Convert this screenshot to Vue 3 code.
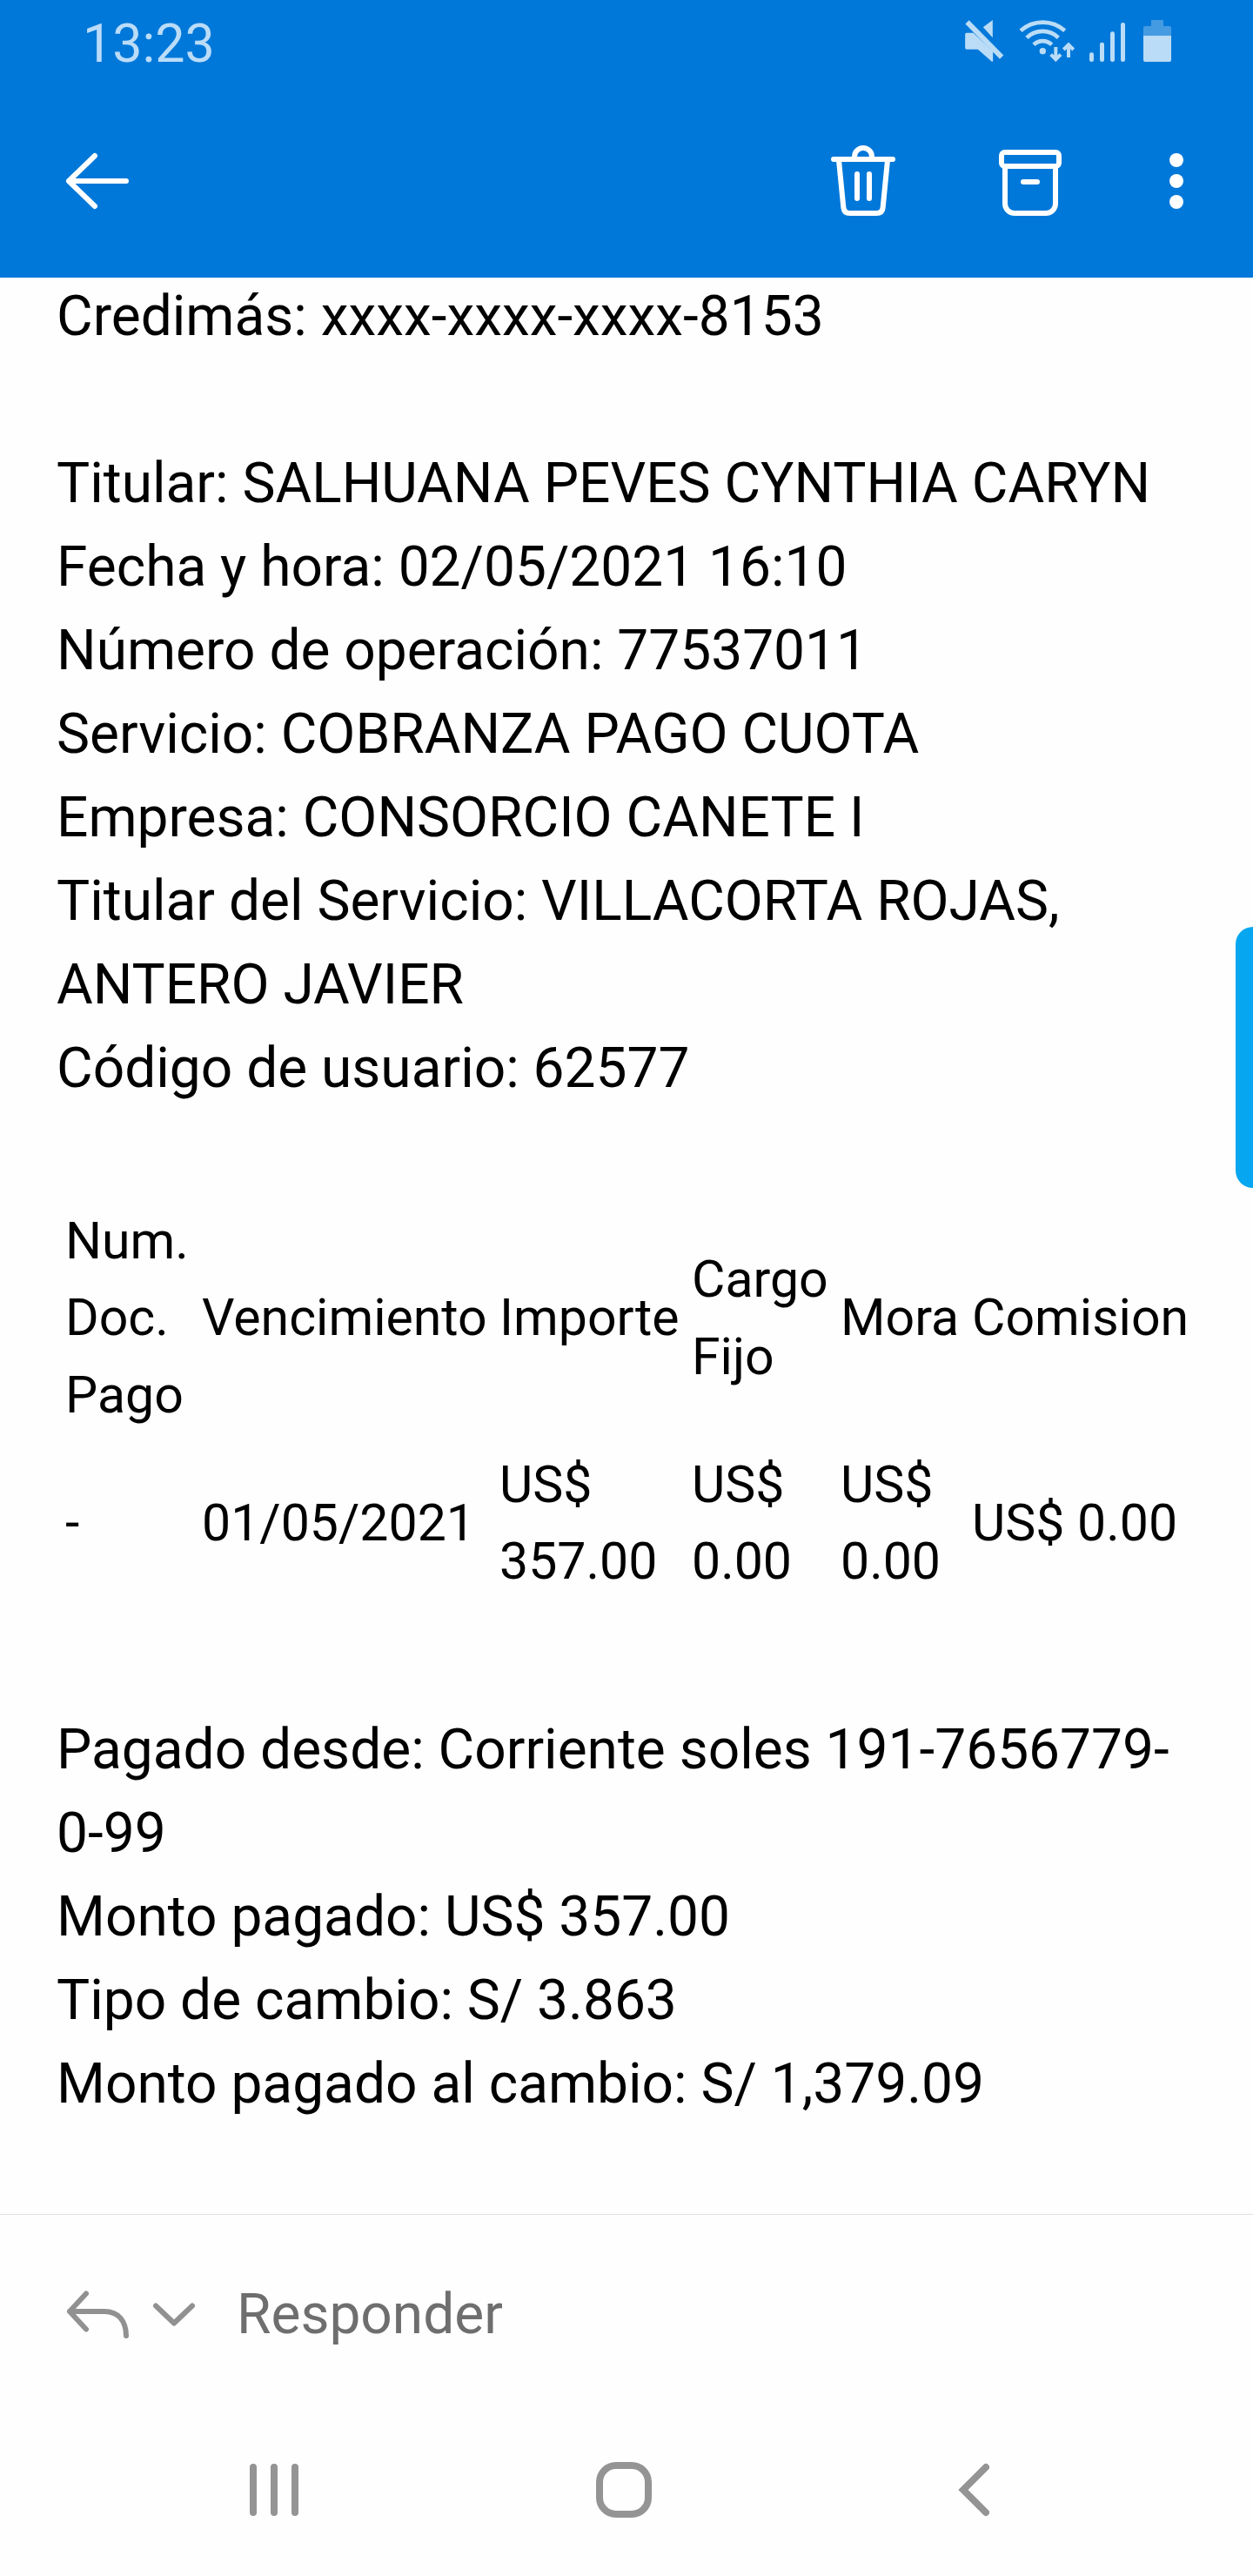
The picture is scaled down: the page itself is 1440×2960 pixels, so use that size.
<template>
  <div class="screen">
    <header class="header">
      <div class="status-bar">
        <span class="time">13:23</span>
        <div class="status-icons">
          <svg class="icon-mute" viewBox="0 0 140 144">
            <path d="M98 0V61L65 25z" />
            <path d="M8 44H31L99 108V143H95L47 101H8Q3 101 3 96V49Q3 44 8 44z" />
            <path class="line" stroke-width="18" d="M10 7L129 128" />
          </svg>
          <svg class="icon-wifi" viewBox="0 0 192 144">
            <g class="line" stroke-width="14">
              <path d="M6 37A114 114 0 0 1 158 37" />
              <path d="M27 61A78 78 0 0 1 136 61" />
              <path d="M51 85A44 44 0 0 1 113 85" />
            </g>
            <circle cx="82" cy="107" r="11" />
            <path class="line" stroke-width="12" d="M127 93V136M110 119L127 136L144 119M171 129V86M154 102L171 85L188 102" />
          </svg>
          <svg class="icon-signal" viewBox="0 0 123 144">
            <rect v-for="bar in signalBars" :key="bar.x" :x="bar.x" :y="bar.y" width="15" :height="144 - bar.y" rx="7" />
          </svg>
          <svg class="icon-battery" viewBox="0 0 96 144">
            <path class="battery-empty" d="M27 0H69V21H90Q96 21 96 27V54H0V27Q0 21 6 21H27z" />
            <path d="M0 54H96V138Q96 144 90 144H6Q0 144 0 138z" />
          </svg>
        </div>
      </div>
      <div class="toolbar">
        <svg class="tool back" viewBox="0 0 216 252">
          <path d="M99 39L9 126L99 213M9 126H207" />
        </svg>
        <svg class="tool trash" viewBox="0 0 222 252">
          <path d="M9 51H213M81 45V42A30 30 0 0 1 141 42V45" />
          <path d="M27 54L43 217Q45 237 65 237H157Q177 237 179 217L195 54" />
          <path d="M90 102V186M132 102V186" />
        </svg>
        <svg class="tool archive" viewBox="0 0 216 252">
          <rect x="9" y="27" width="198" height="48" rx="11" />
          <path d="M21 75V204A33 33 0 0 0 54 237H162A33 33 0 0 0 195 204V75M84 129H132" />
        </svg>
        <svg class="more" viewBox="0 0 48 252">
          <circle v-for="y in [54, 126, 198]" :key="y" cx="24" :cy="y" r="24" />
        </svg>
      </div>
    </header>

    <main class="mail">
      <p>Credimás: xxxx-xxxx-xxxx-8153</p>
      <br />
      <p v-for="item in details" :key="item.label">{{ item.label }}: {{ item.value }}</p>

      <table class="fees">
        <thead>
          <tr>
            <th v-for="col in columns" :key="col.title" :style="{ width: col.width + 'px' }">{{ col.title }}</th>
          </tr>
        </thead>
        <tbody>
          <tr class="gap"></tr>
          <tr>
            <td v-for="col in columns" :key="col.title">{{ col.value }}</td>
          </tr>
        </tbody>
      </table>

      <p v-for="item in payment" :key="item.label">{{ item.label }}: {{ item.value }}</p>
    </main>

    <div class="reply-bar">
      <svg class="icon-reply" viewBox="0 0 72 56">
        <path d="M23 3.5L4 24L23 44.5M4 24H44C60 24 69 35 69 52" />
      </svg>
      <svg class="icon-chevron" viewBox="0 0 50 56">
        <path d="M4 17.5L25 37.5L46 17.5" />
      </svg>
      <span>Responder</span>
    </div>

    <nav class="nav-bar">
      <svg class="nav-recents" viewBox="0 0 56 64">
        <path d="M4 6V58M28 6V58M52 6V58" />
      </svg>
      <svg class="nav-home" viewBox="0 0 64 64">
        <rect x="4" y="4" width="56" height="56" rx="19" />
      </svg>
      <svg class="nav-back" viewBox="0 0 36 64">
        <path d="M32 6L6 32L32 58" />
      </svg>
    </nav>

    <div class="edge-handle"></div>
  </div>
</template>

<script setup>
const signalBars = [
  { x: 0, y: 112 },
  { x: 36, y: 77 },
  { x: 72, y: 40 },
  { x: 108, y: 9 }
]

const details = [
  { label: 'Titular', value: 'SALHUANA PEVES CYNTHIA CARYN' },
  { label: 'Fecha y hora', value: '02/05/2021 16:10' },
  { label: 'Número de operación', value: '77537011' },
  { label: 'Servicio', value: 'COBRANZA PAGO CUOTA' },
  { label: 'Empresa', value: 'CONSORCIO CANETE I' },
  { label: 'Titular del Servicio', value: 'VILLACORTA ROJAS, ANTERO JAVIER' },
  { label: 'Código de usuario', value: '62577' }
]

const columns = [
  { title: 'Num. Doc. Pago', value: '-', width: 157 },
  { title: 'Vencimiento', value: '01/05/2021', width: 342 },
  { title: 'Importe', value: 'US$ 357.00', width: 221 },
  { title: 'Cargo Fijo', value: 'US$ 0.00', width: 171 },
  { title: 'Mora', value: 'US$ 0.00', width: 151 },
  { title: 'Comision', value: 'US$ 0.00', width: 259 }
]

const payment = [
  { label: 'Pagado desde', value: 'Corriente soles 191-7656779-0-99' },
  { label: 'Monto pagado', value: 'US$ 357.00' },
  { label: 'Tipo de cambio', value: 'S/ 3.863' },
  { label: 'Monto pagado al cambio', value: 'S/ 1,379.09' }
]
</script>

<style>
body {
  margin: 0;
  background: #fefefe;
}
</style>

<style scoped>
.screen {
  position: relative;
  display: flex;
  flex-direction: column;
  width: 1440px;
  height: 2960px;
  overflow: hidden;
  background: #fefefe;
  color: #000;
  font-family: Roboto, sans-serif;
  font-size: 64px;
  line-height: 96px;
}

svg {
  display: block;
  flex: none;
}

.header {
  height: 319px;
  flex: none;
  background: #0078d9;
}

.status-bar {
  display: flex;
  align-items: center;
  justify-content: space-between;
  height: 94px;
  padding: 0 94px 0 95px;
  color: #badcf8;
}

.time {
  font-size: 61px;
  line-height: 60px;
  margin-top: 5px;
}

.status-icons {
  display: flex;
  fill: #badcf6;
}

.status-icons svg {
  height: 48px;
}

.line {
  fill: none;
  stroke: #badcf6;
}

.icon-mute {
  width: 47px;
  margin-right: 16px;
}

.icon-wifi {
  width: 64px;
  margin-right: 17px;
}

.icon-signal {
  width: 41px;
  margin-right: 21px;
}

.icon-battery {
  width: 32px;
}

.battery-empty {
  fill: #459be2;
}

.toolbar {
  display: flex;
  align-items: center;
  box-sizing: border-box;
  height: 225px;
  padding: 3px 80px 0 76px;
}

.toolbar svg {
  height: 84px;
}

.tool {
  fill: none;
  stroke: #fff;
  stroke-width: 18;
  stroke-linecap: round;
  stroke-linejoin: round;
}

.back {
  width: 72px;
  margin-right: auto;
}

.trash {
  width: 74px;
  margin-right: 119px;
}

.archive {
  width: 72px;
  margin-right: 124px;
}

.more {
  width: 16px;
  fill: #fff;
}

/* the mail is scrolled a few pixels under the header */
.mail {
  height: 2228px;
  flex: none;
  margin-top: -3px;
  padding: 0 65px;
  box-sizing: border-box;
}

.mail p {
  margin: 0;
}

.fees {
  width: 1301px;
  margin: 106px 0 125px 10px;
  table-layout: fixed;
  border-collapse: collapse;
  font-size: 59px;
  line-height: 88.4px;
}

.fees th,
.fees td {
  padding: 0;
  font-weight: 400;
  text-align: left;
  vertical-align: middle;
}

.gap {
  height: 14.4px;
}

.reply-bar {
  display: flex;
  align-items: center;
  box-sizing: border-box;
  height: 230px;
  padding-left: 76px;
  border-top: 1px solid #e1e1e1;
  color: #6e6e6e;
}

.reply-bar svg {
  height: 56px;
  fill: none;
  stroke: #919191;
  stroke-width: 6;
  stroke-linecap: round;
  stroke-linejoin: round;
}

.icon-reply {
  width: 72px;
  margin-right: 27px;
}

.icon-chevron {
  width: 50px;
  margin-right: 47px;
}

.nav-bar {
  display: flex;
  flex: 1;
  align-items: center;
  padding: 0 0 12px 287px;
}

.nav-bar svg {
  height: 64px;
  fill: none;
  stroke: #949494;
  stroke-width: 8;
  stroke-linecap: round;
}

.nav-recents {
  width: 56px;
}

.nav-home {
  width: 64px;
  margin: 0 352px 0 342px;
}

.nav-back {
  width: 36px;
}

/* edge panel handle floating over the mail */
.edge-handle {
  position: absolute;
  top: 1065px;
  right: 0;
  width: 20px;
  height: 300px;
  border-radius: 20px 0 0 20px;
  background: #06a7f0;
}
</style>
